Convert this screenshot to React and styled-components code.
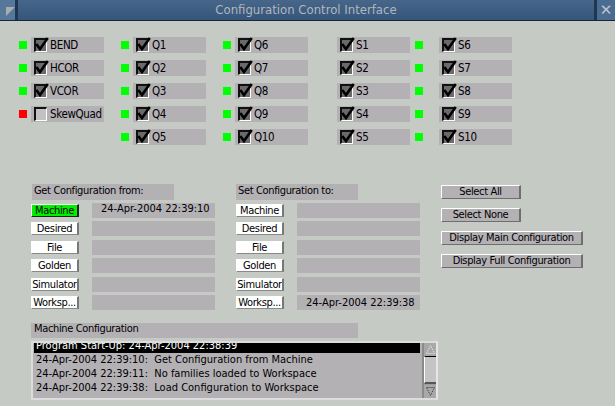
import React from 'react';
import styled, { createGlobalStyle } from 'styled-components';

const FONT = '"Liberation Sans Narrow", "DejaVu Sans Condensed", "Liberation Sans", sans-serif';

const GlobalStyle = createGlobalStyle`
  html, body { margin: 0; padding: 0; background: #c5cbc4; }
  body { width: 615px; height: 406px; overflow: hidden; font-family: ${FONT}; }
`;

const Window = styled.div`
  width: 615px;
  height: 406px;
  display: flex;
  flex-direction: column;
  background: #c5cbc4;
  overflow: hidden;
  color: #000;
  font-size: 11px;
  letter-spacing: -0.35px;
`;

const TitleBar = styled.div`
  height: 20px;
  display: flex;
  background: #3c5b7b;
  border-bottom: 1px solid #17263a;
`;

const CornerBox = styled.div`
  width: 18px;
  background: #557799;
  border-right: 3px solid #1f3550;
  display: flex;
  align-items: flex-start;
  justify-content: flex-start;
  padding: 6px 0 0 6px;
  box-sizing: border-box;
`;

const CloseBox = styled.div`
  width: 21px;
  background: #4a6c90;
  border-left: 3px solid #1f3550;
  box-sizing: border-box;
  color: #c0c4c8;
  font-family: "DejaVu Sans", sans-serif;
  font-size: 15px;
  line-height: 20px;
  text-align: center;
  letter-spacing: 0;
`;

const Title = styled.div`
  flex: 1;
  text-align: center;
  color: #b2b7bd;
  font-size: 13px;
  letter-spacing: 0;
  line-height: 20px;
  background: linear-gradient(#46668a, #36557a);
`;

const Body = styled.div`
  display: flex;
  flex-direction: column;
  padding: 16px 0 0 19px;
`;

const TopGrid = styled.div`
  display: flex;
  align-items: flex-start;
`;

const Column = styled.div`
  display: flex;
  flex-direction: column;
  gap: 7px;
  margin-left: ${p => p.$lead}px;
`;

const Row = styled.div`
  display: flex;
  align-items: center;
  height: 16px;
`;

const Lamp = styled.div`
  width: 8px;
  height: 8px;
  background: ${p => (p.$on ? '#00ff00' : '#ff0000')};
  visibility: ${p => (p.$hidden ? 'hidden' : 'visible')};
  margin-right: ${p => p.$space}px;
`;

const Field = styled.div`
  width: 73px;
  height: 16px;
  background: #b4b1b5;
  display: flex;
  align-items: center;
  box-sizing: border-box;
`;

const Check = styled.div`
  width: 13px;
  height: 14px;
  margin-left: 3px;
  box-sizing: border-box;
  border-top: 2px solid #111;
  border-left: 2px solid #111;
  border-right: 1px solid #fff;
  border-bottom: 1px solid #fff;
  background: ${p => (p.$checked ? '#6a6a6a' : '#c2c2c2')};
  position: relative;
  svg { position: absolute; left: -1px; top: -3px; }
`;

const CheckLabel = styled.span`
  margin-left: 3px;
  font-size: 11.5px;
  line-height: 16px;
`;

const Middle = styled.div`
  display: flex;
  align-items: flex-start;
  margin: 39px 0 0 12px;
`;

const Group = styled.div`
  width: 184px;
  display: flex;
  flex-direction: column;
  margin-right: 21px;
`;

const GroupLabel = styled.div`
  width: ${p => p.$w}px;
  height: 16px;
  margin-left: ${p => p.$indent}px;
  background: #b4b1b5;
  padding-left: 2px;
  box-sizing: border-box;
  line-height: 13px;
  margin-bottom: 3px;
`;

const Rows = styled.div`
  display: flex;
  flex-direction: column;
  gap: 3.4px;
`;

const SourceRow = styled.div`
  display: flex;
  align-items: center;
  height: 15px;
`;

const SourceButton = styled.div`
  width: 48px;
  height: 13px;
  box-sizing: border-box;
  background: ${p => (p.$active ? '#00f000' : '#ffffff')};
  border-top: 1px solid #fff;
  border-left: 1px solid #fff;
  border-right: 2px solid ${p => (p.$active ? '#222' : '#777')};
  border-bottom: 1px solid ${p => (p.$active ? '#222' : '#888')};
  margin-right: 13px;
  line-height: 11px;
  text-align: center;
  white-space: nowrap;
  overflow: hidden;
`;

const Stamp = styled.div`
  width: 123px;
  height: 15px;
  background: #b4b1b5;
  letter-spacing: 0;
  line-height: ${p => (p.$low ? 16 : 11)}px;
  padding-left: 9px;
  box-sizing: border-box;
  white-space: nowrap;
`;

const Actions = styled.div`
  display: flex;
  flex-direction: column;
  align-items: flex-start;
  gap: 9px;
  margin-top: 1px;
`;

const ActionButton = styled.div`
  width: ${p => p.$w}px;
  height: 14px;
  box-sizing: border-box;
  background: #b4b1b5;
  border-top: 1px solid #fff;
  border-left: 1px solid #fff;
  border-right: 2px solid #6e6e6e;
  border-bottom: 1px solid #6e6e6e;
  line-height: 12px;
  text-align: center;
  white-space: nowrap;
`;

const Bottom = styled.div`
  display: flex;
  flex-direction: column;
  margin: 13px 0 0 12px;
`;

const LogLabel = styled.div`
  width: 327px;
  height: 15px;
  background: #b4b1b5;
  padding-left: 3px;
  box-sizing: border-box;
  line-height: 12px;
  margin-bottom: 3px;
`;

const LogBox = styled.div`
  width: 407px;
  height: 59px;
  box-sizing: border-box;
  border: 2px solid #dcdcdc;
  border-right-color: #e6e6e6;
  display: flex;
  background: #b4b1b5;
`;

const LogArea = styled.div`
  flex: 1;
  overflow: hidden;
  padding-left: 1px;
`;

const LogList = styled.div`
  margin-top: -4px;
  display: flex;
  flex-direction: column;
`;

const LogItem = styled.div`
  height: 14px;
  line-height: 14px;
  letter-spacing: 0;
  white-space: pre;
  padding-left: 2px;
  margin-right: 2px;
  background: ${p => (p.$selected ? '#000' : 'transparent')};
  color: ${p => (p.$selected ? '#fff' : '#000')};
`;

const ScrollBar = styled.div`
  width: 14px;
  display: flex;
  flex-direction: column;
  background: #9c9c9c;
  border-left: 2px solid #8a8a8a;
  box-sizing: border-box;
`;

const Arrow = styled.div`
  height: 13px;
  display: flex;
  align-items: center;
  justify-content: center;
  background: #a8a8a8;
`;

const Thumb = styled.div`
  flex: 1;
  background: #c4c4c4;
  border-top: 1px solid #000;
  border-left: 1px solid #fff;
  border-bottom: 2px solid #555;
  margin: 0 0 1px 0;
`;

const CheckMark = () => (
  <svg width="14" height="15" viewBox="0 0 14 15">
    <path d="M2 8 L5 12 L12 2" fill="none" stroke="#000" strokeWidth="2.6" strokeLinecap="square" />
  </svg>
);

const columns = [
  {
    lead: 0,
    space: 4,
    items: [
      { label: 'BEND', on: true, checked: true },
      { label: 'HCOR', on: true, checked: true },
      { label: 'VCOR', on: true, checked: true },
      { label: 'SkewQuad', on: false, checked: false },
    ],
  },
  { lead: 17, space: 4, items: ['Q1', 'Q2', 'Q3', 'Q4', 'Q5'].map(l => ({ label: l, on: true, checked: true })) },
  { lead: 17, space: 4, items: ['Q6', 'Q7', 'Q8', 'Q9', 'Q10'].map(l => ({ label: l, on: true, checked: true })) },
  { lead: 17, space: 4, hidden: true, items: ['S1', 'S2', 'S3', 'S4', 'S5'].map(l => ({ label: l, on: true, checked: true })) },
  { lead: 5, space: 16, items: ['S6', 'S7', 'S8', 'S9', 'S10'].map(l => ({ label: l, on: true, checked: true })) },
];

const sources = ['Machine', 'Desired', 'File', 'Golden', 'Simulator', 'Worksp...'];

const log = [
  'Program Start-Up: 24-Apr-2004 22:38:39',
  '24-Apr-2004 22:39:10:  Get Configuration from Machine',
  '24-Apr-2004 22:39:11:  No families loaded to Workspace',
  '24-Apr-2004 22:39:38:  Load Configuration to Workspace',
];

const App = () => {
  return (
    <Window>
      <GlobalStyle />
      <TitleBar>
        <CornerBox>
          <svg width="11" height="11" viewBox="0 0 11 11">
            <polygon points="0,0 11,0 0,11" fill="#a9acb0" />
          </svg>
        </CornerBox>
        <Title>Configuration Control Interface</Title>
        <CloseBox>✕</CloseBox>
      </TitleBar>
      <Body>
        <TopGrid>
          {columns.map((col, ci) => (
            <Column key={ci} $lead={col.lead}>
              {col.items.map(item => (
                <Row key={item.label}>
                  <Lamp $on={item.on} $hidden={col.hidden} $space={col.space} />
                  <Field>
                    <Check $checked={item.checked}>{item.checked && <CheckMark />}</Check>
                    <CheckLabel>{item.label}</CheckLabel>
                  </Field>
                </Row>
              ))}
            </Column>
          ))}
        </TopGrid>

        <Middle>
          <Group>
            <GroupLabel $w={142} $indent={1}>Get Configuration from:</GroupLabel>
            <Rows>
              {sources.map((s, i) => (
                <SourceRow key={s}>
                  <SourceButton $active={i === 0}>{s}</SourceButton>
                  <Stamp>{i === 0 ? '24-Apr-2004 22:39:10' : ''}</Stamp>
                </SourceRow>
              ))}
            </Rows>
          </Group>
          <Group>
            <GroupLabel $w={122} $indent={0}>Set Configuration to:</GroupLabel>
            <Rows>
              {sources.map((s, i) => (
                <SourceRow key={s}>
                  <SourceButton>{s}</SourceButton>
                  <Stamp $low>{i === 5 ? '24-Apr-2004 22:39:38' : ''}</Stamp>
                </SourceRow>
              ))}
            </Rows>
          </Group>
          <Actions>
            <ActionButton $w={80}>Select All</ActionButton>
            <ActionButton $w={80}>Select None</ActionButton>
            <ActionButton $w={142}>Display Main Configuration</ActionButton>
            <ActionButton $w={142}>Display Full Configuration</ActionButton>
          </Actions>
        </Middle>

        <Bottom>
          <LogLabel>Machine Configuration</LogLabel>
          <LogBox>
            <LogArea>
              <LogList>
                {log.map((line, i) => (
                  <LogItem key={i} $selected={i === 0}>{line}</LogItem>
                ))}
              </LogList>
            </LogArea>
            <ScrollBar>
              <Arrow>
                <svg width="9" height="9" viewBox="0 0 9 9">
                  <polygon points="4.5,0.5 8.5,8.5 0.5,8.5" fill="none" stroke="#eee" strokeWidth="1" strokeDasharray="1 1" />
                </svg>
              </Arrow>
              <Thumb />
              <Arrow>
                <svg width="9" height="9" viewBox="0 0 9 9">
                  <polygon points="0.5,0.5 8.5,0.5 4.5,8.5" fill="none" stroke="#333" strokeWidth="1" strokeDasharray="1 1" />
                </svg>
              </Arrow>
            </ScrollBar>
          </LogBox>
        </Bottom>
      </Body>
    </Window>
  );
};

export default App;
